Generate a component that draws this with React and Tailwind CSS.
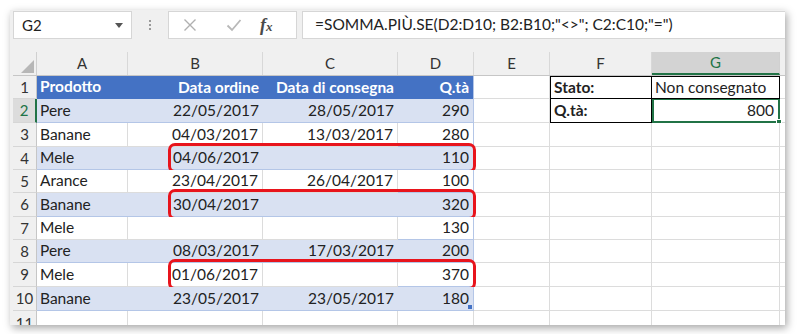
import React from 'react';

const font = { fontFamily: 'Lato, "Open Sans", sans-serif' };

const cols = [
  { key: 'A', w: 'w-[91px]' },
  { key: 'B', w: 'w-[135px]' },
  { key: 'C', w: 'w-[135px]' },
  { key: 'D', w: 'w-[76px]' },
  { key: 'E', w: 'w-[76px]' },
  { key: 'F', w: 'w-[102px]' },
  { key: 'G', w: 'w-[128px]' },
];

const heights = ['h-[23px]', 'h-[24px]', 'h-[24px]', 'h-[23px]', 'h-[23px]', 'h-[24px]', 'h-[23px]', 'h-[23px]', 'h-[24px]', 'h-[24px]'];

const data = [
  ['Pere', '22/05/2017', '28/05/2017', '290'],
  ['Banane', '04/03/2017', '13/03/2017', '280'],
  ['Mele', '04/06/2017', '', '110'],
  ['Arance', '23/04/2017', '26/04/2017', '100'],
  ['Banane', '30/04/2017', '', '320'],
  ['Mele', '', '', '130'],
  ['Pere', '08/03/2017', '17/03/2017', '200'],
  ['Mele', '01/06/2017', '', '370'],
  ['Banane', '23/05/2017', '23/05/2017', '180'],
];

// rows with a red outline around B:D
const marked = [4, 6, 9];

function FormulaBar() {
  return (
    <div className="h-[42px] flex items-start pt-[1px] pl-[3px] bg-[#f0f0f0]">
      <div className="w-[119px] h-[28px] bg-white border border-[#d6d6d6] flex items-center justify-between pl-[8px] pr-[8px] text-[15px] text-[#222]">
        <span>G2</span>
        <svg width="8" height="5" viewBox="0 0 8 5"><path d="M0 0h8L4 5z" fill="#555" /></svg>
      </div>
      <div className="w-[36px] h-[28px] flex flex-col items-center justify-center gap-[2px]">
        <span className="w-[2px] h-[2px] bg-[#9a9a9a]" />
        <span className="w-[2px] h-[2px] bg-[#9a9a9a]" />
        <span className="w-[2px] h-[2px] bg-[#9a9a9a]" />
      </div>
      <div className="w-[129px] h-[28px] bg-white border border-[#d6d6d6] flex items-center">
        <svg className="ml-[14px]" width="14" height="14" viewBox="0 0 14 14">
          <path d="M1.5 1.5l11 11M12.5 1.5l-11 11" stroke="#b0b0b0" strokeWidth="1.4" />
        </svg>
        <svg className="ml-[29px]" width="16" height="14" viewBox="0 0 16 14">
          <path d="M1.5 7.5l4.5 4.5 8.5-10" stroke="#b8b8b8" strokeWidth="1.8" fill="none" />
        </svg>
        <span className="ml-[18px] text-[18px] italic font-bold text-[#4a4a4a] leading-none" style={{ fontFamily: '"Liberation Serif", serif' }}>
          f<span className="text-[13px]">x</span>
        </span>
      </div>
      <div className="ml-[5px] flex-1 h-[28px] bg-white border border-[#d6d6d6] border-r-0 flex items-center pl-[12px] text-[15.5px] text-[#222]">
        =SOMMA.PIÙ.SE(D2:D10; B2:B10;"&lt;&gt;"; C2:C10;"=")
      </div>
    </div>
  );
}

function ColumnHeaders() {
  return (
    <div className="flex h-[24px] bg-[#f0f0f0] border-b border-[#c6c6c6]">
      <div className="w-[24px] border-r border-[#d0d0d0] flex items-end justify-end p-[2px]">
        <svg width="13" height="13" viewBox="0 0 13 13"><path d="M13 0v13H0z" fill="#b7b7b7" /></svg>
      </div>
      {cols.map((c) => (
        <div
          key={c.key}
          className={
            c.w +
            ' flex items-center justify-center text-[15px] border-r ' +
            (c.key === 'G'
              ? 'bg-[#d3d3d3] text-[#217346] border-[#d0d0d0] border-b-2 border-b-[#217346]'
              : 'text-[#333] border-[#d8d8d8]')
          }
        >
          {c.key}
        </div>
      ))}
      <div className="flex-1" />
    </div>
  );
}

function Row({ n, h, cells, header }) {
  const band = header ? '' : n % 2 === 0 ? 'bg-[#d9e1f2]' : 'bg-white';
  const tableLine = 'border-b border-[#b4c6e7]';
  const vLine = n % 2 === 0 || header ? 'border-r-transparent' : 'border-r border-[#dcdcdc]';
  const current = n === 2;

  return (
    <div className={'relative flex ' + h}>
      <div
        className={
          'w-[24px] flex items-center justify-center text-[15px] border-b border-[#d6d6d6] ' +
          (current
            ? 'bg-[#dcdcdc] text-[#217346] border-r-2 border-r-[#217346]'
            : 'bg-[#f0f0f0] text-[#333] border-r border-r-[#c6c6c6]')
        }
      >
        {n}
      </div>

      {header ? (
        <>
          <div className="w-[91px] bg-[#4472c4] text-white font-bold text-[15.5px] flex items-center pl-[3px] border-b border-[#4472c4]">Prodotto</div>
          <div className="w-[135px] bg-[#4472c4] text-white font-bold text-[15.5px] flex items-center justify-end pr-[4px]">Data ordine</div>
          <div className="w-[135px] bg-[#4472c4] text-white font-bold text-[15.5px] flex items-center justify-end pr-[4px]">Data di consegna</div>
          <div className="w-[76px] bg-[#4472c4] text-white font-bold text-[15.5px] flex items-center justify-end pr-[4px] border-r border-[#b4c6e7]">Q.tà</div>
        </>
      ) : (
        <>
          <div className={'w-[91px] flex items-center pl-[3px] text-[15.5px] text-[#222] ' + band + ' ' + tableLine + ' ' + vLine}>{cells[0]}</div>
          <div className={'w-[135px] flex items-center justify-end pr-[4px] text-[15.5px] text-[#222] ' + band + ' ' + tableLine + ' ' + vLine}>{cells[1]}</div>
          <div className={'w-[135px] flex items-center justify-end pr-[4px] text-[15.5px] text-[#222] ' + band + ' ' + tableLine + ' ' + vLine}>{cells[2]}</div>
          <div className={'relative w-[76px] flex items-center justify-end pr-[4px] text-[15.5px] text-[#222] border-r border-r-[#b4c6e7] ' + band + ' ' + tableLine}>
            {cells[3]}
            {n === 10 && <span className="absolute right-[1px] bottom-[1px] w-[4px] h-[4px] bg-[#4472c4]" />}
          </div>
        </>
      )}

      <div className="w-[76px] bg-white border-r border-b border-[#dcdcdc]" />

      {n === 1 && (
        <>
          <div className="w-[102px] bg-white border border-black flex items-center pl-[3px] text-[15.5px] font-bold text-[#222]">Stato:</div>
          <div className="w-[128px] bg-white border-y border-r border-black flex items-center pl-[3px] text-[15.5px] text-[#222]">Non consegnato</div>
        </>
      )}
      {n === 2 && (
        <>
          <div className="w-[102px] bg-white border-x border-b border-black flex items-center pl-[3px] text-[15.5px] font-bold text-[#222]">Q.tà:</div>
          <div className="relative w-[128px] bg-white border-2 border-t-[1px] border-[#217346] flex items-center justify-end pr-[4px] text-[15.5px] text-[#222]">
            800
            <span className="absolute -right-[4px] -bottom-[4px] w-[6px] h-[6px] bg-[#217346] border border-white" />
          </div>
        </>
      )}
      {n > 2 && (
        <>
          <div className="w-[102px] bg-white border-r border-b border-[#dcdcdc]" />
          <div className="w-[128px] bg-white border-r border-b border-[#dcdcdc]" />
        </>
      )}
      <div className="flex-1 bg-white border-b border-[#dcdcdc]" />

      {marked.includes(n) && (
        <div className="absolute left-[155px] top-[-4px] bottom-[-3px] w-[308px] border-[3px] border-[#e8141c] rounded-[7px] pointer-events-none" />
      )}
    </div>
  );
}

export default function App() {
  return (
    <div className="w-[800px] h-[334px] bg-white overflow-hidden pt-[10px] pl-[10px]" style={font}>
      <div className="w-[775px] h-[315px] bg-[#f0f0f0] overflow-hidden shadow-[2px_3px_8px_rgba(0,0,0,0.35)]">
        <FormulaBar />
        <div className="pl-[3px]">
          <ColumnHeaders />
          <Row n={1} h={heights[0]} header />
          {data.map((cells, i) => (
            <Row key={i} n={i + 2} h={heights[i + 1]} cells={cells} />
          ))}
          <div className="flex h-[24px]">
            <div className="w-[24px] bg-[#f0f0f0] border-r border-[#c6c6c6] flex items-center justify-center text-[15px] text-[#333]">11</div>
            {cols.map((c) => (
              <div key={c.key} className={c.w + ' bg-white border-r border-[#dcdcdc]'} />
            ))}
            <div className="flex-1 bg-white" />
          </div>
        </div>
      </div>
    </div>
  );
}
